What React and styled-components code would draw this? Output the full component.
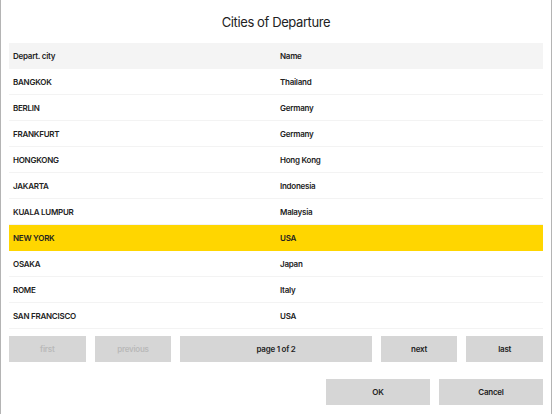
import React from "react";
import styled, { createGlobalStyle } from "styled-components";

const cities = [
  ["BANGKOK", "Thailand"],
  ["BERLIN", "Germany"],
  ["FRANKFURT", "Germany"],
  ["HONGKONG", "Hong Kong"],
  ["JAKARTA", "Indonesia"],
  ["KUALA LUMPUR", "Malaysia"],
  ["NEW YORK", "USA"],
  ["OSAKA", "Japan"],
  ["ROME", "Italy"],
  ["SAN FRANCISCO", "USA"],
];

const GlobalStyle = createGlobalStyle`
  html, body {
    margin: 0;
    padding: 0;
    background: #ffffff;
  }
  body {
    font-family: Inter, "Liberation Sans", sans-serif;
    color: #1c1c1c;
  }
`;

const Dialog = styled.div`
  box-sizing: border-box;
  width: 552px;
  height: 414px;
  border-left: 1px solid #b4b4b4;
  border-right: 1px solid #b4b4b4;
  padding: 0 8px;
  display: flex;
  flex-direction: column;
`;

const Title = styled.h1`
  margin: 0;
  height: 43px;
  display: flex;
  align-items: center;
  justify-content: center;
  font-size: 13px;
  letter-spacing: -0.4px;
  font-weight: 400;
  color: #222;
`;

const Table = styled.div`
  display: flex;
  flex-direction: column;
`;

const Row = styled.div`
  display: grid;
  grid-template-columns: 1fr 1fr;
  height: 26px;
  align-items: center;
  background: ${(p) => (p.$head ? "#f4f4f4" : p.$active ? "#ffd600" : "#fff")};
  border-bottom: 1px solid ${(p) => (p.$head || p.$active ? "transparent" : "#f3f3f3")};
  box-sizing: border-box;
`;

const Cell = styled.div`
  padding-left: 4px;
  font-size: 8px;
  letter-spacing: -0.25px;
  font-weight: 600;
  color: #222;
`;

const Pager = styled.div`
  display: grid;
  grid-template-columns: 1fr 1fr 2.5fr 1fr 1fr;
  gap: 9px;
  margin-top: 7px;
`;

const Button = styled.button`
  height: 26px;
  border: none;
  border-radius: 0;
  background: #d6d6d6;
  font-family: Inter, "Liberation Sans", sans-serif;
  font-size: 8px;
  letter-spacing: -0.25px;
  font-weight: 600;
  color: ${(p) => (p.disabled ? "#b9b9b9" : "#222")};
  padding: 0;
  cursor: ${(p) => (p.disabled ? "default" : "pointer")};
`;

const Actions = styled.div`
  display: flex;
  justify-content: flex-end;
  gap: 9px;
  margin-top: 17px;
`;

const ActionButton = styled(Button)`
  width: 104px;
`;

export default function App() {
  return (
    <>
      <GlobalStyle />
      <Dialog>
        <Title>Cities of Departure</Title>
        <Table>
          <Row $head>
            <Cell>Depart. city</Cell>
            <Cell>Name</Cell>
          </Row>
          {cities.map(([city, name]) => (
            <Row key={city} $active={city === "NEW YORK"}>
              <Cell>{city}</Cell>
              <Cell>{name}</Cell>
            </Row>
          ))}
        </Table>
        <Pager>
          <Button disabled>first</Button>
          <Button disabled>previous</Button>
          <Button>page 1 of 2</Button>
          <Button>next</Button>
          <Button>last</Button>
        </Pager>
        <Actions>
          <ActionButton>OK</ActionButton>
          <ActionButton>Cancel</ActionButton>
        </Actions>
      </Dialog>
    </>
  );
}
